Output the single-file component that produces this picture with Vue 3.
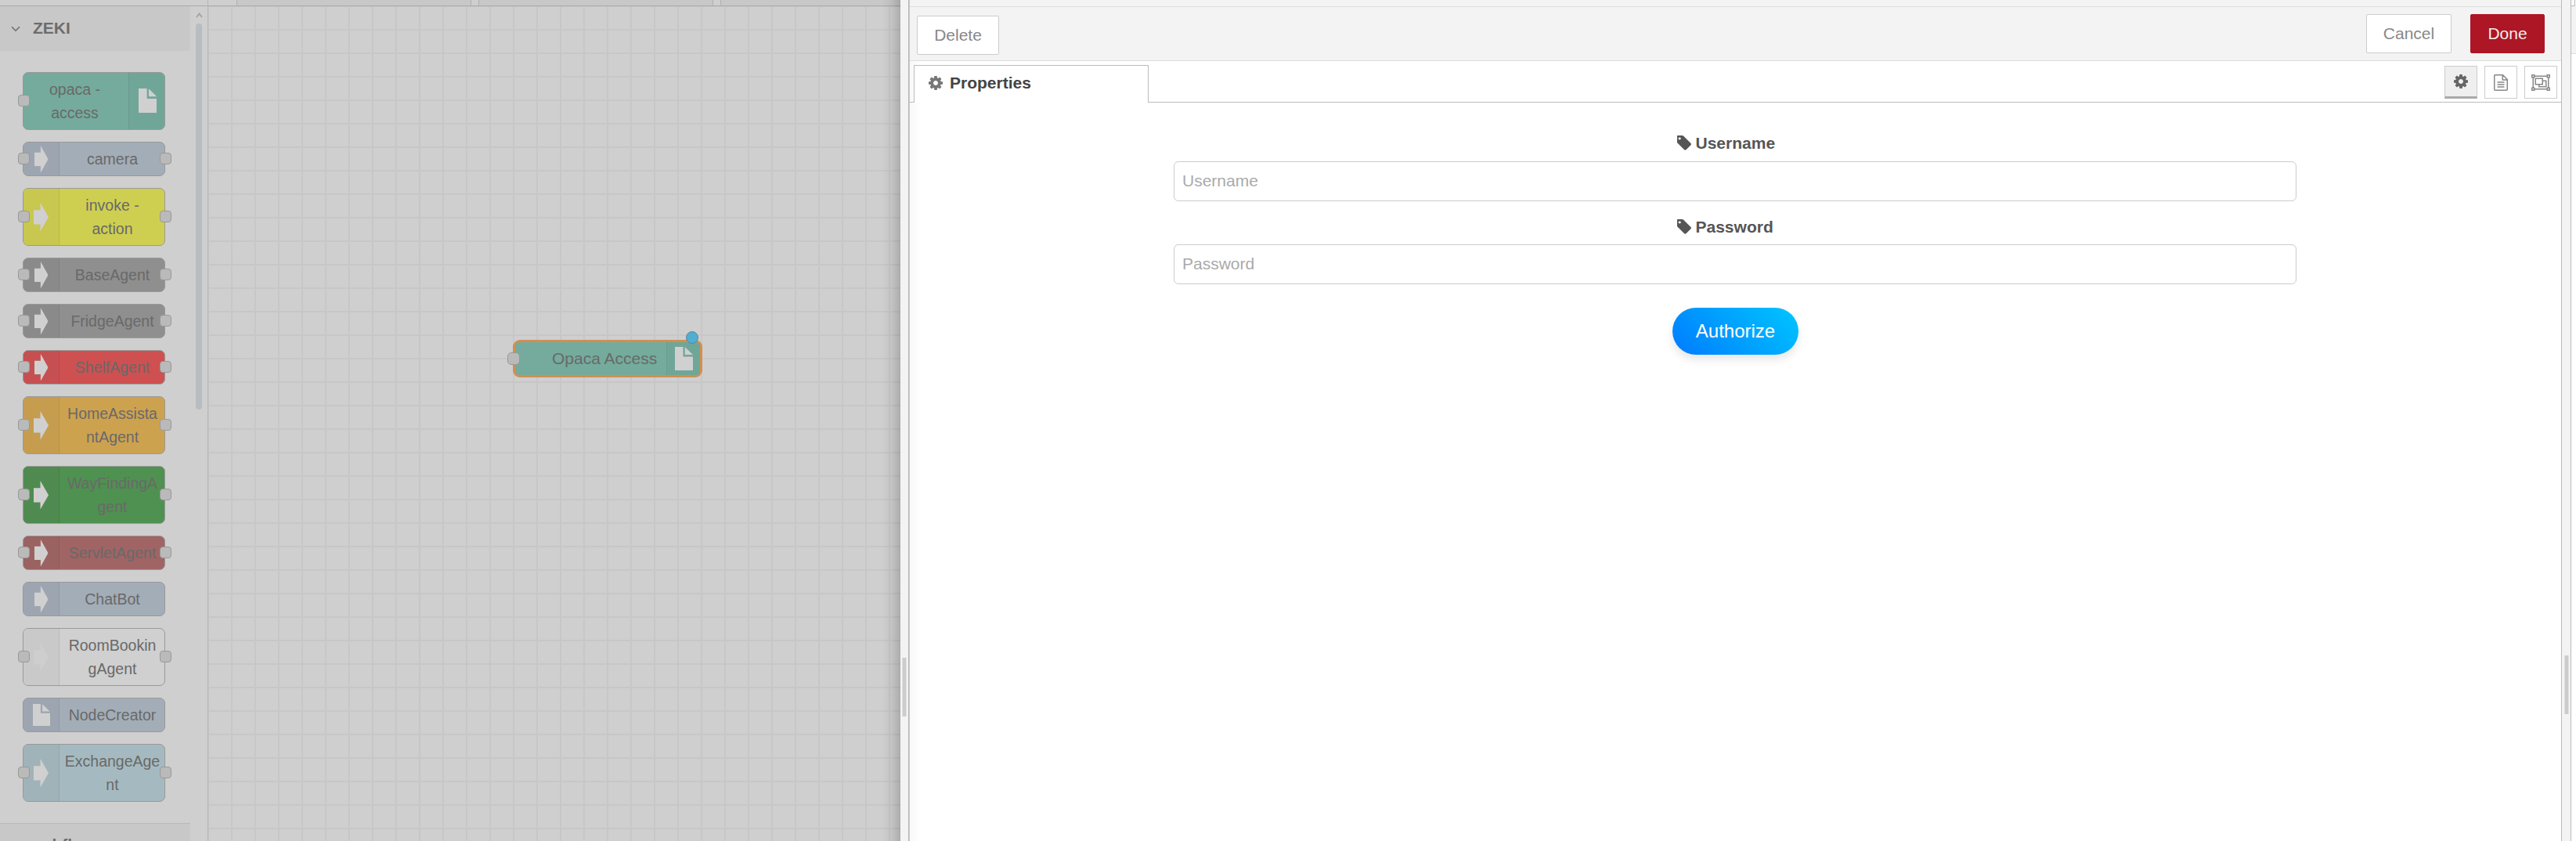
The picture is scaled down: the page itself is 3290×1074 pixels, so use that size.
<script setup>
const nodes = [
  { lines: ['opaca -', 'access'], fill: '#74ab9c', shade: '#70a698', icon: 'file', side: 'right', inp: true },
  { lines: ['camera'], fill: '#a3adb7', shade: '#9da5b1', inp: true, out: true },
  { lines: ['invoke -', 'action'], fill: '#cecf50', shade: '#c8c74f', inp: true, out: true },
  { lines: ['BaseAgent'], fill: '#8f8f8f', shade: '#8a8a8a', inp: true, out: true },
  { lines: ['FridgeAgent'], fill: '#8f8f8f', shade: '#8a8a8a', inp: true, out: true },
  { lines: ['ShelfAgent'], fill: '#ce5051', shade: '#c65051', inp: true, out: true },
  { lines: ['HomeAssista', 'ntAgent'], fill: '#cda24f', shade: '#c69d4f', inp: true, out: true },
  { lines: ['WayFindingA', 'gent'], fill: '#4f9150', shade: '#4f8b50', inp: true, out: true },
  { lines: ['ServletAgent'], fill: '#a06464', shade: '#9b6262', inp: true, out: true },
  { lines: ['ChatBot'], fill: '#a3adb7', shade: '#9da5b1' },
  { lines: ['RoomBookin', 'gAgent'], fill: '#d0d0d0', shade: '#c9c9c9', iconColor: '#cecece', inp: true, out: true },
  { lines: ['NodeCreator'], fill: '#a3adb7', shade: '#9da5b1', icon: 'file' },
  { lines: ['ExchangeAge', 'nt'], fill: '#a5bac0', shade: '#a0b3b9', inp: true, out: true },
]
const gear = 'M1024 640q0-106-75-181t-181-75-181 75-75 181 75 181 181 75 181-75 75-181zm512-109v222q0 12-8 23t-20 13l-185 28q-19 54-39 91 35 50 107 138 10 12 10 25t-9 23q-27 37-99 108t-94 71q-12 0-26-9l-138-108q-44 23-91 38-16 136-29 186-7 28-36 28h-222q-14 0-24.500-8.500t-11.500-21.500l-28-184q-49-16-90-37l-141 107q-10 9-25 9-14 0-25-11-126-114-165-168-7-10-7-23 0-12 8-23 15-21 51-66.500t54-70.500q-27-50-41-99l-183-27q-13-2-21-12.500t-8-23.500v-222q0-12 8-23t19-13l186-28q14-46 39-92-40-57-107-138-10-12-10-24 0-10 9-23 26-36 98.500-107.500t94.500-71.500q13 0 26 10l138 107q44-23 91-38 16-136 29-186 7-28 36-28h222q14 0 24.500 8.500t11.500 21.500l28 184q49 16 90 37l142-107q9-9 24-9 13 0 25 10 129 119 165 170 7 8 7 22 0 12-8 23-15 21-51 66.500t-54 70.500q26 50 41 98l183 28q13 2 21 12.500t8 23.500z'
const tag = 'M384 320q0-53-37.500-90.500t-90.500-37.500-90.500 37.500-37.500 90.500 37.500 90.500 90.500 37.500 90.500-37.500 37.500-90.500zM1451 896q0 53-37 90l-491 492q-39 37-91 37-53 0-90-37l-715-716q-38-37-64.500-101t-26.500-117v-416q0-52 38-90t90-38h416q53 0 117 26.500t102 64.500l715 714q37 39 37 91z'
</script>

<template>
  <div class="editor">
    <aside class="palette">
      <div class="palette-search"></div>
      <div class="palette-body">
        <div class="categories">
          <div class="category-head">
            <svg class="chevron" viewBox="0 0 12 8"><path d="M1 1.300 6 6.300 11 1.300" /></svg>
            <span>ZEKI</span>
          </div>
          <div class="node-list">
            <div
              v-for="n in nodes"
              :key="n.lines[0]"
              class="node"
              :class="{ tall: n.lines.length > 1, flip: n.side === 'right' }"
              :style="{ background: n.fill }"
            >
              <div class="node-icon" :style="{ background: n.shade, color: n.iconColor }">
                <svg v-if="n.icon === 'file'" class="file" viewBox="0 0 71 93" preserveAspectRatio="none">
                  <path d="M0 0H32V39H71V93H0Z M39 1V31H70Z" />
                </svg>
                <svg v-else class="arrow" viewBox="0 0 19 36" preserveAspectRatio="none">
                  <path d="M0 9H8.500V0L19 18 8.500 36V27H0Z" />
                </svg>
              </div>
              <div class="node-label"><span v-for="l in n.lines" :key="l">{{ l }}</span></div>
              <i v-if="n.inp" class="port in"></i>
              <i v-if="n.out" class="port out"></i>
            </div>
          </div>
          <div class="category-head next">
            <svg class="chevron" viewBox="0 0 12 8"><path d="M1 1.300 6 6.300 11 1.300" /></svg>
            <span>subflows</span>
          </div>
        </div>
        <div class="scroll">
          <svg viewBox="0 0 9 7"><path d="M1 6 4.500 1.500 8 6" /></svg>
          <div class="thumb"></div>
        </div>
      </div>
    </aside>

    <main class="workspace">
      <div class="flow-tabs"><div class="flow-tab"></div><div class="flow-tab"></div><div class="flow-tab"></div></div>
      <div class="canvas">
        <div class="flow-node">
          <div class="flow-label">Opaca Access</div>
          <div class="flow-icon">
            <svg viewBox="0 0 71 93" preserveAspectRatio="none"><path d="M0 0H32V39H71V93H0Z M39 1V31H70Z" /></svg>
          </div>
          <i class="flow-port"></i>
          <i class="flow-dot"></i>
        </div>
      </div>
      <div class="shadow"></div>
    </main>

    <div class="splitter left"><div class="grip"></div></div>

    <section class="tray">
      <div class="tray-top"></div>
      <div class="toolbar">
        <button class="btn delete">Delete</button>
        <div class="actions">
          <button class="btn cancel">Cancel</button>
          <button class="btn done">Done</button>
        </div>
      </div>
      <div class="tabs">
        <div class="tab">
          <svg viewBox="0 -128 1536 1536"><path :d="gear" /></svg>
          <span>Properties</span>
        </div>
        <div class="tab-tools">
          <div class="tool active"><svg width="18" height="18" viewBox="0 -128 1536 1536"><path :d="gear" /></svg></div>
          <div class="tool">
            <svg class="line" width="18" height="21" viewBox="0 0 18 21">
              <path d="M1.500 .75H11.500L17.250 6.500V19.200Q17.250 20.250 16.200 20.250H1.800Q.75 20.250 .75 19.200V1.500Q.75 .75 1.500 .75ZM11.250 1V7H17M4.500 10H13.500M4.500 13H13.500M4.500 16H13.500" />
            </svg>
          </div>
          <div class="tool">
            <svg class="line" width="24" height="21" viewBox="0 0 24 21">
              <path d="M4 2.250H20M4 18.750H20M2.250 4V17M21.750 4V17M.75 .75H3.750V3.750H.75ZM20.250 .75H23.250V3.750H20.250ZM.75 17.250H3.750V20.250H.75ZM20.250 17.250H23.250V20.250H20.250ZM5.250 5.250H14.250V12.750H5.250ZM14.250 8.250H18.750V15.750H9.750V12.750" />
            </svg>
          </div>
        </div>
      </div>
      <form class="form" @submit.prevent>
        <label class="first"><svg viewBox="0 0 1536 1536"><path :d="tag" /></svg>Username</label>
        <input type="text" placeholder="Username" />
        <label class="second"><svg viewBox="0 0 1536 1536"><path :d="tag" /></svg>Password</label>
        <input type="password" placeholder="Password" />
        <button class="authorize">Authorize</button>
      </form>
    </section>

    <div class="splitter right"><div class="grip"></div></div>
    <aside class="sidebar"><div class="side-tab"></div><div class="side-bar"></div></aside>
  </div>
</template>

<style>
body { margin: 0; overflow: hidden; }
</style>

<style scoped>
* { box-sizing: border-box; }
.editor {
  display: flex;
  width: 3290px;
  height: 1074px;
  overflow: hidden;
  background: #fff;
  font-family: "Liberation Sans", Arial, sans-serif;
  font-size: 21px;
  color: #555;
}
svg { display: block; fill: currentColor; flex: none; }

.palette { width: 266px; height: 1074px; background: #cfcfcf; border-right: 1px solid #b5b5b5; display: flex; flex-direction: column; overflow: hidden; }
.palette-search { height: 8px; flex: none; border-bottom: 1px solid #aaa; }
.palette-body { display: flex; height: 1066px; }
.categories { width: 243px; }
.category-head { height: 57px; display: flex; align-items: center; background: #c8c8c8; padding: 0 0 2px 14px; font-weight: bold; color: #6c6c6c; }
.category-head span { margin-left: 16px; line-height: 24px; }
.category-head.next { border-top: 1px solid #b9b9b9; }
.chevron { width: 12px; height: 8px; fill: none; stroke: #6c6c6c; stroke-width: 1.5; margin-top: 3px; }
.node-list { display: flex; flex-direction: column; gap: 15px; padding: 27px 0 27px 29px; }
.node { position: relative; display: flex; width: 182px; height: 44px; border: 1px solid #999; border-radius: 7px; }
.node.tall { height: 74px; }
.node.flip { flex-direction: row-reverse; }
.node-icon { width: 46px; display: flex; align-items: center; border-right: 1px solid rgba(0, 0, 0, .07); border-radius: 6px 0 0 6px; color: #d0d0d0; }
.flip .node-icon { border-right: 0; border-left: 1px solid rgba(0, 0, 0, .07); border-radius: 0 6px 6px 0; }
.arrow { width: 17.600px; height: 34.600px; margin-left: 13.700px; }
.tall .arrow { width: 19px; height: 36.500px; margin-left: 13px; }
.file { width: 22px; height: 28.300px; margin-left: 12px; }
.tall .file { width: 23.600px; height: 31px; margin: 0 0 2px 11.600px; }
.node-label { flex: 1; display: flex; flex-direction: column; justify-content: center; text-align: center; font-size: 19.500px; line-height: 30px; color: #696969; padding: 0 0 1px 1px; }
.flip .node-label { padding: 0 3px 1px 0; }
.port { position: absolute; top: calc(50% - 8px); width: 15px; height: 15px; border: 1px solid #999; border-radius: 4px; background: #bababa; }
.port.in { left: -7px; }
.port.out { right: -9px; }
.scroll { display: flex; flex-direction: column; padding-left: 7px; }
.scroll svg { width: 9px; height: 7px; margin: 8px 0 7px; fill: none; stroke: #a5a5a5; stroke-width: 2; }
.thumb { width: 8px; height: 493px; border-radius: 4px; background: #b7bdc1; }

.workspace { position: relative; width: 884px; display: flex; flex-direction: column; background: #cfcfcf; }
.flow-tabs { height: 8px; display: flex; gap: 9px; padding-left: 36px; border-bottom: 1px solid #aaa; overflow: hidden; }
.flow-tab { width: 300px; flex: none; height: 7px; background: #c8c8c8; border: solid #b0b0b0; border-width: 0 1px; }
.canvas {
  flex: 1;
  padding: 426px 0 0 389px;
  background-image: linear-gradient(#c7c7c7 2px, transparent 2px), linear-gradient(90deg, #c7c7c7 2px, transparent 2px);
  background-size: 30px 30px;
  background-position: 29px 29px;
}
.flow-node { position: relative; width: 242px; height: 48px; display: flex; background: #74ab9c; border: 3px solid #d08f52; border-radius: 9px; }
.flow-label { width: 193px; padding-left: 47px; line-height: 41px; color: #696969; white-space: nowrap; }
.flow-icon { flex: 1; background: #70a698; border-left: 1px solid #6a9d90; border-radius: 0 5px 5px 0; color: #d0d0d0; padding: 6px 0 0 10px; }
.flow-icon svg { width: 23.300px; height: 30px; }
.flow-port { position: absolute; left: -10px; top: 13px; width: 16px; height: 16px; border: 1px solid #999; border-radius: 5px; background: #bababa; }
.flow-dot { position: absolute; left: 218px; top: -14px; width: 16px; height: 16px; border-radius: 50%; background: #50aed1; border: 1px solid #5c85a2; }
.shadow { position: absolute; top: 0; right: 0; width: 24px; height: 100%; background: linear-gradient(90deg, transparent, rgba(0, 0, 0, .05) 50%, rgba(0, 0, 0, .17)); }

.splitter { background: #f3f3f3; flex: none; }
.splitter.left { width: 12px; border-right: 1px solid #ccc; box-shadow: inset -1px 0 #b5b5b5; padding: 840px 0 0 2px; }
.splitter.right { width: 13px; border: solid #bbb; border-width: 0 1px; padding: 837px 0 0 3px; }
.grip { width: 6px; height: 75px; background: #ccc; border: solid #e0e0e0; border-width: 0 1px; }

.tray { width: 2109px; display: flex; flex-direction: column; background: linear-gradient(90deg, #f8f8f8, #fff 14px); }
.tray-top { height: 9px; background: #f3f3f3; border-bottom: 1px solid #ddd; }
.toolbar { height: 69px; display: flex; justify-content: space-between; background: #f3f3f3; border-bottom: 1px solid #ddd; padding: 9px 21px 0 9px; }
.btn { height: 50px; font: inherit; color: #888; background: #fff; border: 1px solid #ccc; border-radius: 2px; padding: 0; }
.delete { width: 105px; margin-top: 2px; }
.actions { display: flex; gap: 24px; }
.cancel { width: 109px; }
.done { width: 95px; background: #ad1625; border-color: #ad1625; color: #eee; }
.tabs { height: 53px; display: flex; justify-content: space-between; box-shadow: inset 0 -1px #bbb; padding: 5px 5px 0; }
.tab { width: 300px; height: 48px; display: flex; align-items: center; border: 1px solid #bbb; border-bottom: 0; background: #fff; padding: 0 0 3px 18px; color: #444; font-weight: bold; }
.tab svg { width: 18px; height: 18px; color: #777; margin-right: 9px; }
.tab-tools { display: flex; gap: 9px; padding-top: 1px; }
.tool { width: 42px; height: 42px; display: flex; align-items: center; justify-content: center; border: 1px solid #ccc; background: #fff; color: #888; }
.tool.active { background: #efefef; border-bottom: 3px solid #aaa; color: #666; }
.line { fill: none; stroke: currentColor; stroke-width: 1.5; }

.form { display: flex; flex-direction: column; align-items: center; }
.form label { width: 150px; height: 30px; display: flex; align-items: center; font-weight: bold; }
.form label svg { width: 19px; height: 19px; margin: 0 5px 2px 0; }
.first { margin-top: 37px; }
.second { margin-top: 18px; }
.form input { width: 1434px; height: 51px; margin: 8px 1px 0 0; border: 1px solid #ccc; border-radius: 6px; padding: 0 10px 1px; font: inherit; background: #fff; outline: 0; }
.form .second + input { margin-top: 7px; }
.form input::placeholder { color: #aaa; opacity: 1; }
.authorize { width: 161px; height: 60px; margin-top: 30px; border: 0; border-radius: 30px; font: inherit; font-size: 24px; color: #fff; background: linear-gradient(45deg, #007bff, #00c6ff); box-shadow: 0 6px 12px rgba(0, 0, 0, .1); }

.sidebar { width: 6px; background: #fff; }
.side-tab { width: 5px; height: 8px; border: solid #bbb; border-width: 0 1px 1px 0; }
.side-bar { height: 61px; background: #f3f3f3; border-bottom: 1px solid #ddd; }
</style>
